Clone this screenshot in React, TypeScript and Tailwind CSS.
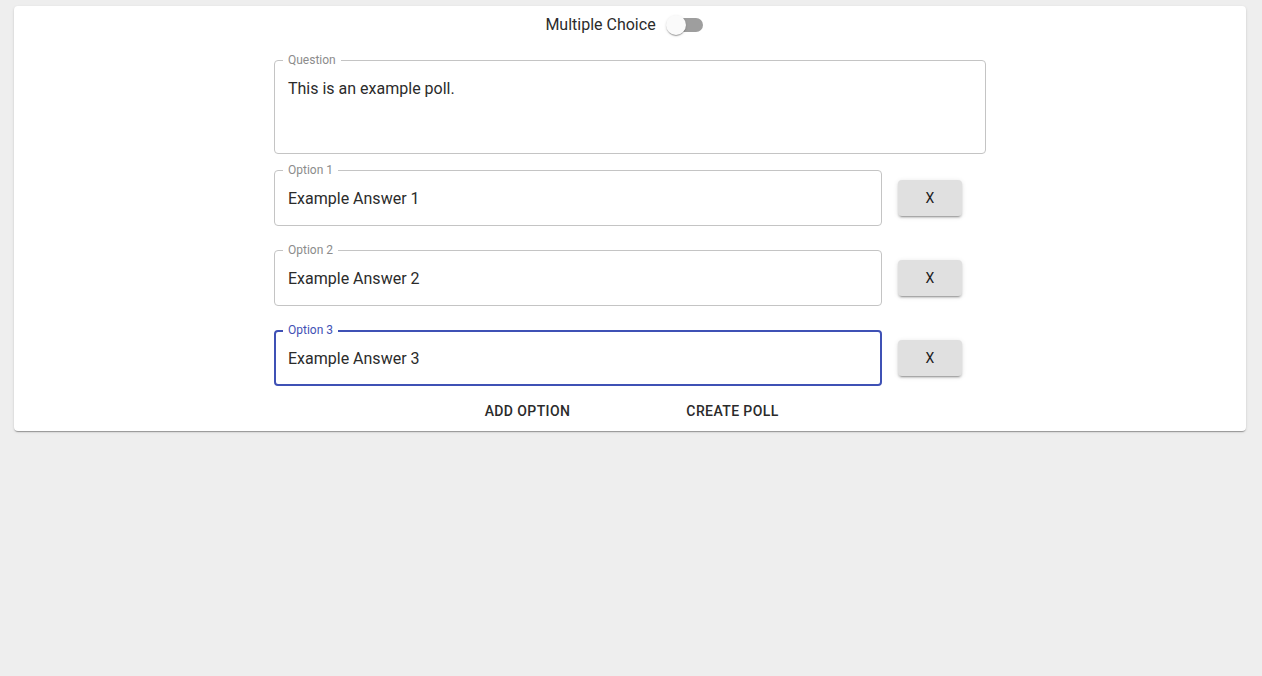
import React from "react";

const font = { fontFamily: "Roboto, 'Liberation Sans', sans-serif" };

function OptionRow({ label, value, focused }: { label: string; value: string; focused?: boolean }) {
  return (
    <div className="flex items-center">
      <div
        className={
          "relative w-[608px] h-[56px] rounded-[4px] flex items-center pt-[2px] " +
          (focused ? "border-2 border-[#3f51b5] pl-[12px]" : "border border-[#c4c4c4] pl-[13px]")
        }
      >
        <span
          className={
            "absolute bg-white px-[5px] text-[12px] leading-[16px] " +
            (focused ? "top-[-10px] left-[7px] text-[#3f51b5]" : "top-[-9px] left-[8px] text-[#8c8c8c]")
          }
        >
          {label}
        </span>
        <span className="text-[16px] text-[#2b2b2b]">{value}</span>
      </div>
      <button className="ml-[16px] w-[64px] h-[36px] rounded-[4px] bg-[#e0e0e0] text-[14px] font-normal text-[#212121] shadow-[0_3px_1px_-2px_rgba(0,0,0,0.2),0_2px_2px_0_rgba(0,0,0,0.14),0_1px_5px_0_rgba(0,0,0,0.12)]">
        X
      </button>
    </div>
  );
}

export default function App() {
  return (
    <div className="min-h-[676px] bg-[#eeeeee] pt-[6px]" style={font}>
      <div className="ml-[14px] w-[1232px] bg-white rounded-[4px] shadow-[0_2px_1px_-1px_rgba(0,0,0,0.2),0_1px_1px_0_rgba(0,0,0,0.14),0_1px_3px_0_rgba(0,0,0,0.12)] pb-[2px]">
        <div className="flex justify-center">
          <div className="flex items-center h-[38px]">
            <span className="text-[16px] text-[#2b2b2b] pr-[1px]">Multiple Choice</span>
            <div className="relative w-[58px] h-[38px]">
              <div className="absolute left-[12px] top-[12px] w-[34px] h-[14px] rounded-full bg-[#9e9e9e]" />
              <div className="absolute left-[9px] top-[9px] w-[20px] h-[20px] rounded-full bg-[#fafafa] shadow-[0_2px_1px_-1px_rgba(0,0,0,0.2),0_1px_1px_0_rgba(0,0,0,0.14),0_1px_3px_0_rgba(0,0,0,0.12)]" />
            </div>
          </div>
        </div>
        <div className="w-[712px] mx-auto mt-[16px] flex flex-col">
          <div className="relative h-[94px] rounded-[4px] border border-[#c4c4c4] px-[13px] pt-[18px]">
            <span className="absolute left-[8px] top-[-9px] bg-white px-[5px] text-[12px] leading-[16px] text-[#8c8c8c]">
              Question
            </span>
            <div className="text-[16px] leading-[19px] text-[#2b2b2b]">This is an example poll.</div>
          </div>
          <div className="mt-[16px] flex flex-col gap-[24px]">
            <OptionRow label="Option 1" value="Example Answer 1" />
            <OptionRow label="Option 2" value="Example Answer 2" />
            <OptionRow label="Option 3" value="Example Answer 3" focused />
          </div>
        </div>
        <div className="flex justify-center mt-[7px]">
          <button className="w-[205px] h-[36px] text-[14px] font-medium tracking-[0.4px] text-[#2b2b2b]">ADD OPTION</button>
          <button className="w-[205px] h-[36px] text-[14px] font-medium tracking-[0.4px] text-[#2b2b2b]">CREATE POLL</button>
        </div>
      </div>
    </div>
  );
}
